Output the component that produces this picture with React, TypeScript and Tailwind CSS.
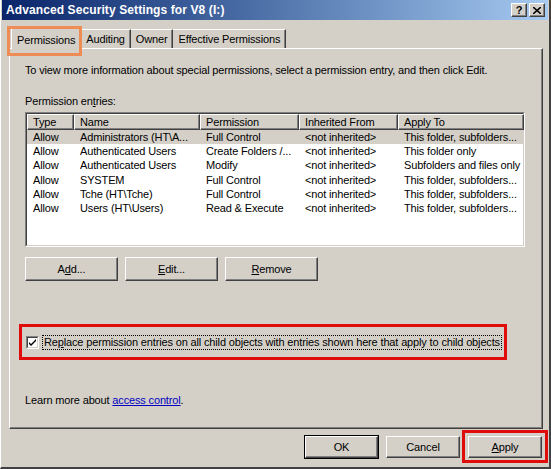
import React from "react";

const rows = [
  { type: "Allow", name: "Administrators (HT\\A...", perm: "Full Control", inh: "<not inherited>", to: "This folder, subfolders..." },
  { type: "Allow", name: "Authenticated Users", perm: "Create Folders /...", inh: "<not inherited>", to: "This folder only" },
  { type: "Allow", name: "Authenticated Users", perm: "Modify", inh: "<not inherited>", to: "Subfolders and files only" },
  { type: "Allow", name: "SYSTEM", perm: "Full Control", inh: "<not inherited>", to: "This folder, subfolders..." },
  { type: "Allow", name: "Tche (HT\\Tche)", perm: "Full Control", inh: "<not inherited>", to: "This folder, subfolders..." },
  { type: "Allow", name: "Users (HT\\Users)", perm: "Read & Execute", inh: "<not inherited>", to: "This folder, subfolders..." },
];

const cols = [
  { label: "Type", w: "w-[47px]" },
  { label: "Name", w: "w-[126px]" },
  { label: "Permission", w: "w-[99px]" },
  { label: "Inherited From", w: "w-[99px]" },
  { label: "Apply To", w: "w-[126px]" },
];

// classic raised 3d button
function Btn({ children, className = "", dark = false }: { children: React.ReactNode; className?: string; dark?: boolean }) {
  return (
    <div
      className={`flex items-center justify-center bg-[#d4d0c8] border border-t-white border-l-white border-r-[#404040] border-b-[#404040] shadow-[inset_-1px_-1px_0_#808080] ${dark ? "outline outline-1 outline-black" : ""} ${className}`}
    >
      {children}
    </div>
  );
}

export default function App() {
  return (
    <div className="relative w-[551px] h-[469px] overflow-hidden bg-[#d4d0c8] text-[11px] tracking-[-0.15px] text-black font-['Liberation_Sans',Arial,sans-serif] border-l border-l-[#ffffff] border-r-2 border-r-[#404040] border-b-2 border-b-[#404040]">
      {/* title bar */}
      <div className="h-[20px] mx-[1px] flex items-center justify-between bg-gradient-to-r from-[#0a246a] to-[#a6caf0] pl-[4px] pr-[3px]">
        <span className="text-white font-bold text-[12px] tracking-[0.1px]">Advanced Security Settings for V8 (I:)</span>
        <div className="flex gap-[2px]">
          <Btn className="w-[16px] h-[14px] font-bold text-[11px] leading-none">?</Btn>
          <Btn className="w-[16px] h-[14px]">
            <svg width="8" height="7" viewBox="0 0 8 7">
              <path d="M0 0 L8 7 M8 0 L0 7" stroke="black" strokeWidth="1.6" />
            </svg>
          </Btn>
        </div>
      </div>

      {/* tabs */}
      <div className="flex items-end ml-[10px] mt-[6px] h-[22px]">
        <div className="relative z-10 h-[22px] px-[5px] flex items-start pt-[4px] bg-[#d4d0c8] border-t border-l border-t-white border-l-white border-r border-r-[#404040] shadow-[inset_-1px_0_0_#808080] mb-[-1px]">
          Permissions
        </div>
        <div className="h-[19px] px-[5px] flex items-center border-t border-t-white border-r border-r-[#404040] shadow-[inset_-1px_0_0_#808080]">Auditing</div>
        <div className="h-[19px] px-[5px] flex items-center border-t border-t-white border-r border-r-[#404040] shadow-[inset_-1px_0_0_#808080]">Owner</div>
        <div className="h-[19px] px-[5px] flex items-center border-t border-t-white border-r border-r-[#404040] shadow-[inset_-1px_0_0_#808080]">Effective Permissions</div>
      </div>
      {/* orange highlight around selected tab */}
      <div className="absolute left-[6px] top-[26px] w-[75px] h-[30px] border-[3px] border-[#ef8b55] pointer-events-none z-20" />

      {/* tab panel */}
      <div className="ml-[8px] w-[534px] h-[381px] border border-t-white border-l-white border-r-[#404040] border-b-[#404040] shadow-[inset_-1px_-1px_0_#808080] pl-[15px] pt-[15px]">
        <div className="h-[13px] leading-[13px]">
          To view more information about special permissions, select a permission entry, and then click Edit.
        </div>
        <div className="mt-[18px] h-[13px] leading-[13px]">
          Permission en<span className="underline">t</span>ries:
        </div>

        {/* list */}
        <div className="mt-[4px] w-[500px] h-[135px] bg-white border border-t-[#808080] border-l-[#808080] border-r-white border-b-white">
          <div className="h-full border border-t-[#404040] border-l-[#404040] border-r-[#d4d0c8] border-b-[#d4d0c8]">
            <div className="flex h-[16px]">
              {cols.map((c) => (
                <div
                  key={c.label}
                  className={`${c.w} shrink-0 h-[16px] pl-[5px] flex items-center bg-[#d4d0c8] border border-t-white border-l-white border-r-[#404040] border-b-[#404040] shadow-[inset_-1px_-1px_0_#808080]`}
                >
                  {c.label}
                </div>
              ))}
            </div>
            {rows.map((r, i) => (
              <div key={i} className={`flex h-[14.2px] leading-[14px] ${i === 0 ? "bg-[#d4d0c8]" : ""}`}>
                <div className="w-[47px] pl-[6px] shrink-0">{r.type}</div>
                <div className="w-[126px] pl-[6px] shrink-0 whitespace-nowrap">{r.name}</div>
                <div className="w-[99px] pl-[6px] shrink-0 whitespace-nowrap">{r.perm}</div>
                <div className="w-[99px] pl-[6px] shrink-0 whitespace-nowrap">{r.inh}</div>
                <div className="w-[124px] pl-[6px] shrink-0 whitespace-nowrap">{r.to}</div>
              </div>
            ))}
          </div>
        </div>

        {/* add/edit/remove */}
        <div className="flex gap-[7px] mt-[10px]">
          <Btn className="w-[93px] h-[24px]">
            <span>A<span className="underline">d</span>d...</span>
          </Btn>
          <Btn className="w-[93px] h-[24px]">
            <span><span className="underline">E</span>dit...</span>
          </Btn>
          <Btn className="w-[93px] h-[24px]">
            <span><span className="underline">R</span>emove</span>
          </Btn>
        </div>

        {/* replace checkbox, red highlight */}
        <div className="mt-[43px] ml-[-6px] w-[488px] h-[36px] border-[3px] border-[#e00b0b] flex items-center pl-[4px]">
          <div className="w-[13px] h-[13px] bg-white border border-t-[#808080] border-l-[#808080] border-r-white border-b-white flex items-center justify-center">
            <div className="w-full h-full border border-t-[#404040] border-l-[#404040] border-r-[#d4d0c8] border-b-[#d4d0c8] flex items-center justify-center">
              <svg width="7" height="7" viewBox="0 0 7 7">
                <path d="M0 3 L2 5 L7 0 L7 2 L2 7 L0 5 Z" fill="black" />
              </svg>
            </div>
          </div>
          <div className="ml-[3px] px-[1px] h-[15px] leading-[13px] border border-dotted border-black whitespace-nowrap">
            Re<span className="underline">p</span>lace permission entries on all child objects with entries shown here that apply to child objects
          </div>
        </div>

        <div className="mt-[34px] h-[13px] leading-[13px]">
          Learn more about <span className="underline text-[#0000c0]">access control</span>.
        </div>
      </div>

      {/* bottom buttons */}
      <div className="flex justify-end mt-[7px] mr-[7px] gap-[8px]">
        <Btn dark className="w-[73px] h-[22px]">OK</Btn>
        <Btn className="w-[74px] h-[22px]">Cancel</Btn>
        <div className="relative">
          <Btn className="w-[74px] h-[22px]">
            <span><span className="underline">A</span>pply</span>
          </Btn>
          <div className="absolute left-[-6px] top-[-6px] w-[86px] h-[33px] border-[3px] border-[#e00b0b] pointer-events-none" />
        </div>
      </div>
    </div>
  );
}
